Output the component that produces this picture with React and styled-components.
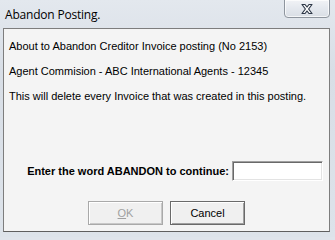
import React from 'react';
import styled, { createGlobalStyle } from 'styled-components';

const GlobalStyle = createGlobalStyle`
  html, body {
    margin: 0;
    padding: 0;
    background: #dfe4eb;
  }
`;

const Frame = styled.div`
  width: 335px;
  height: 237px;
  box-sizing: border-box;
  padding: 0 5px 5px 3px;
  display: flex;
  flex-direction: column;
  background: linear-gradient(180deg, #e3e8ee 0%, #d8dee6 30%, #dde3ea 100%);
  overflow: hidden;
`;

const TitleBar = styled.div`
  height: 28px;
  display: flex;
  align-items: flex-start;
  justify-content: space-between;
  padding-left: 2px;
`;

const Title = styled.div`
  font-family: 'Open Sans', 'Noto Sans', sans-serif;
  font-size: 12px;
  line-height: 16px;
  margin-top: 7px;
  color: #000;
  letter-spacing: -0.2px;
`;

const CloseButton = styled.div`
  width: 46px;
  height: 19px;
  margin-top: -1px;
  box-sizing: border-box;
  border: 1px solid #8e959e;
  border-radius: 0 0 4px 4px;
  background: linear-gradient(180deg, #f1f3f6 0%, #e4e8ee 50%, #d9dee5 100%);
  box-shadow: inset 0 0 0 1px rgba(255, 255, 255, 0.7);
  display: flex;
  align-items: center;
  justify-content: center;
`;

const Client = styled.div`
  flex: 1;
  box-sizing: border-box;
  border: 1px solid #7d7d7d;
  border-bottom-color: #5f5f5f;
  background: #f4f4f4;
  padding: 11px 5px 6px 5px;
  display: flex;
  flex-direction: column;
`;

const Message = styled.div`
  font-family: 'Liberation Sans', Arial, sans-serif;
  font-size: 11px;
  line-height: 13px;
  color: #000;
  margin-bottom: 12px;
`;

const PromptRow = styled.div`
  display: flex;
  align-items: center;
  justify-content: flex-end;
  gap: 3px;
  padding-right: 1px;
  margin-top: 46px;
`;

const PromptLabel = styled.label`
  font-family: 'Liberation Sans', Arial, sans-serif;
  font-weight: bold;
  font-size: 11px;
  color: #000;
`;

const TextBox = styled.input`
  width: 91px;
  height: 20px;
  box-sizing: border-box;
  margin: 0;
  padding: 0 3px;
  background: #fff;
  border: 1px solid;
  border-color: #a0a0a0 #ffffff #ffffff #a0a0a0;
  box-shadow: inset 1px 1px 0 #696969, inset -1px -1px 0 #e3e3e3;
  outline: none;
  font-family: 'Liberation Sans', Arial, sans-serif;
  font-size: 11px;
`;

const ButtonRow = styled.div`
  display: flex;
  justify-content: center;
  gap: 7px;
  margin-top: auto;
`;

const Button = styled.button`
  width: 75px;
  height: 24px;
  box-sizing: border-box;
  margin: 0;
  padding: 0;
  font-family: 'Liberation Sans', Arial, sans-serif;
  font-size: 11px;
  background: #f0f0f0;
  color: ${(p) => (p.disabled ? '#a0a0a0' : '#000')};
  border: 1px solid ${(p) => (p.disabled ? '#a9a9a9' : '#6a6a6a')};
  box-shadow: ${(p) =>
    p.disabled
      ? 'inset 1px 1px 0 #ffffff, inset -1px -1px 0 #c8c8c8'
      : 'inset 1px 1px 0 #ffffff, inset -1px -1px 0 #a0a0a0'};
`;

const Mnemonic = styled.span`
  text-decoration: underline;
`;

const CloseGlyph = () => (
  <svg width="14" height="12" viewBox="0 0 14 12">
    <path
      d="M2 1.5 H5 L7 4 L9 1.5 H12 L8.6 6 L12 10.5 H9 L7 8 L5 10.5 H2 L5.4 6 Z"
      fill="#ffffff"
      stroke="#2e3848"
      strokeWidth="1.2"
      strokeLinejoin="round"
    />
  </svg>
);

const App = () => {
  return (
    <>
      <GlobalStyle />
      <Frame>
        <TitleBar>
          <Title>Abandon Posting.</Title>
          <CloseButton>
            <CloseGlyph />
          </CloseButton>
        </TitleBar>
        <Client>
          <Message>About to Abandon Creditor Invoice posting (No 2153)</Message>
          <Message>Agent Commision - ABC International Agents - 12345</Message>
          <Message>This will delete every Invoice that was created in this posting.</Message>
          <PromptRow>
            <PromptLabel htmlFor="abandon-word">Enter the word ABANDON to continue:</PromptLabel>
            <TextBox id="abandon-word" type="text" />
          </PromptRow>
          <ButtonRow>
            <Button disabled>
              <Mnemonic>O</Mnemonic>K
            </Button>
            <Button>Cancel</Button>
          </ButtonRow>
        </Client>
      </Frame>
    </>
  );
};

export default App;
